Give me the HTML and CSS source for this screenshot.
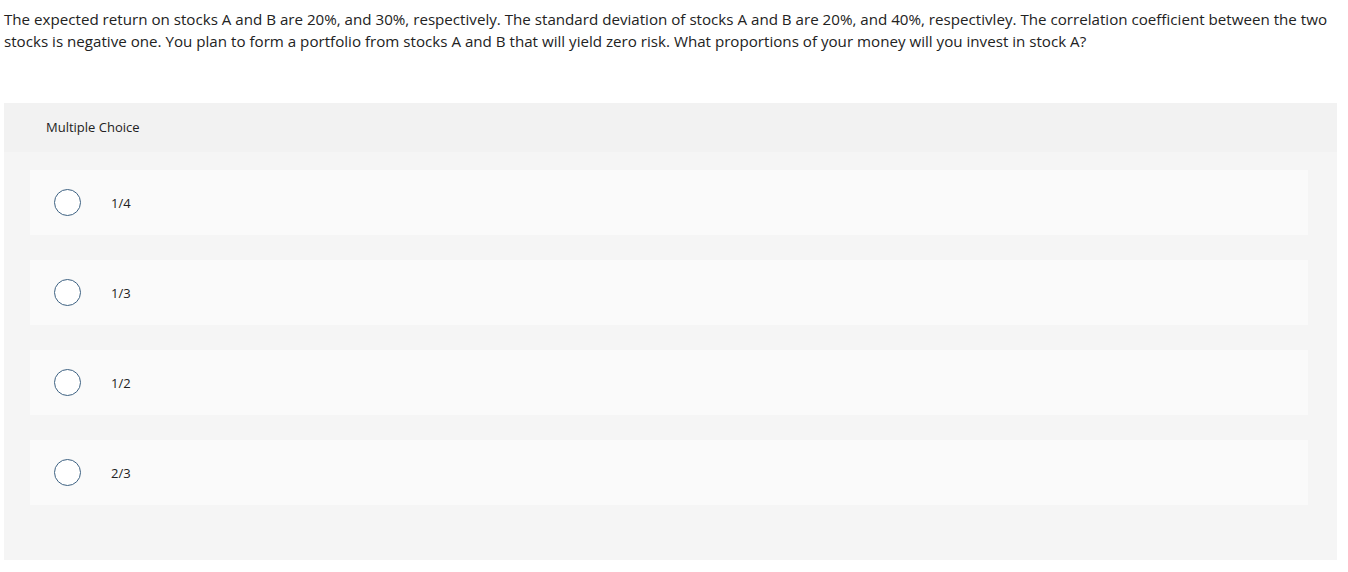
FILE: index.html
```html
<!DOCTYPE html>
<html>
<head>
<meta charset="utf-8">
<link rel="stylesheet" href="styles.css">
</head>
<body>
<p class="question">The expected return on stocks A and B are 20%, and 30%, respectively. The standard deviation of stocks A and B are 20%, and 40%, respectivley. The correlation coefficient between the two stocks is negative one. You plan to form a portfolio from stocks A and B that will yield zero risk. What proportions of your money will you invest in stock A?</p>
<div class="mc">
  <div class="mc-head">Multiple Choice</div>
  <div class="mc-body">
    <div class="opt"><span class="radio"></span><span class="label">1/4</span></div>
    <div class="opt"><span class="radio"></span><span class="label">1/3</span></div>
    <div class="opt"><span class="radio"></span><span class="label">1/2</span></div>
    <div class="opt"><span class="radio"></span><span class="label">2/3</span></div>
  </div>
</div>
</body>
</html>
```
FILE: styles.css
```css
html, body { margin: 0; padding: 0; background: #fff; }
body { font-family: "Open Sans", "Liberation Sans", sans-serif; color: #222; }
.question {
  margin: 0;
  padding: 8px 4px 0 4px;
  font-size: 15.15px;
  line-height: 22px;
  width: 1338px;
}
.mc {
  margin: 51px 0 0 4px;
  width: 1333px;
  background: #f5f5f5;
  padding-bottom: 55px;
}
.mc-head {
  background: #f2f2f2;
  height: 49px;
  display: flex;
  align-items: center;
  padding-left: 42px;
  padding-bottom: 1px;
  box-sizing: border-box;
  font-size: 13px;
  color: #222;
}
.mc-body {
  padding: 18px 0 0 26px;
  display: flex;
  flex-direction: column;
  gap: 25px;
}
.opt {
  width: 1278px;
  height: 65px;
  background: #fafafa;
  display: flex;
  align-items: center;
}
.radio {
  width: 25px;
  height: 25px;
  border: 1.5px solid #3d6182;
  border-radius: 50%;
  margin-left: 24px;
  background: #fff;
}
.label {
  margin-left: 30px;
  font-size: 13px;
  color: #222;
}
```
